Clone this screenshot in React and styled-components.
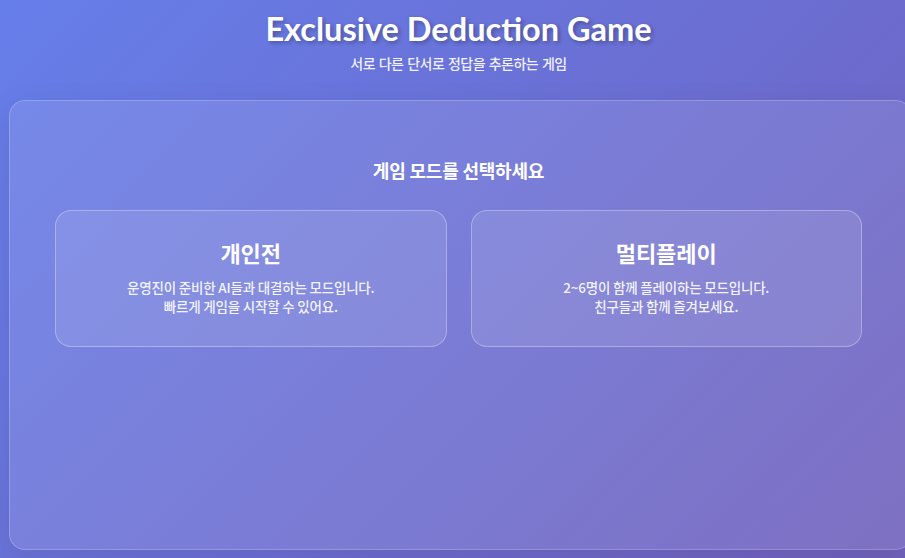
import React from "react";
import styled, { createGlobalStyle } from "styled-components";

const Global = createGlobalStyle`
  html, body { margin: 0; padding: 0; }
  body {
    min-height: 558px;
    background: linear-gradient(135deg, #667eea 0%, #7060bc 100%);
    font-family: "Noto Sans", "Noto Sans CJK KR", sans-serif;
    color: #fff;
    overflow: hidden;
  }
`;

const Page = styled.div`
  width: 903px;
  margin-left: 9px;
  display: flex;
  flex-direction: column;
  align-items: stretch;
`;

const Header = styled.header`
  width: 899px;
  display: flex;
  flex-direction: column;
  align-items: center;
  padding-top: 9px;
  height: 100px;
  box-sizing: border-box;
`;

const Title = styled.h1`
  margin: 0;
  font-family: "Lato", "Noto Sans", sans-serif;
  font-weight: 700;
  font-size: 32.5px;
  line-height: 40px;
  text-shadow: 2px 2px 4px rgba(0, 0, 0, 0.3);
`;

const Subtitle = styled.p`
  margin: 4px 0 0;
  font-family: "Noto Sans CJK KR", sans-serif;
  font-size: 14px;
  line-height: 20px;
  font-weight: 500;
  letter-spacing: -0.5px;
  word-spacing: 1px;
  color: rgba(255, 255, 255, 0.92);
`;

const Panel = styled.section`
  height: 450px;
  box-sizing: border-box;
  border-radius: 16px;
  background: rgba(255, 255, 255, 0.1);
  border: 1px solid rgba(255, 255, 255, 0.2);
  box-shadow: 0 8px 32px rgba(0, 0, 0, 0.08);
  padding: 56px 49px 0 45px;
  display: flex;
  flex-direction: column;
  align-items: stretch;
`;

const SectionTitle = styled.h2`
  margin: 0;
  text-align: center;
  font-family: "Noto Sans CJK KR", sans-serif;
  font-size: 18px;
  line-height: 26px;
  font-weight: 700;
  letter-spacing: -0.2px;
`;

const Grid = styled.div`
  margin-top: 27px;
  display: grid;
  grid-template-columns: 1fr 1fr;
  gap: 24px;
`;

const Card = styled.button`
  height: 137px;
  box-sizing: border-box;
  border-radius: 16px;
  background: rgba(255, 255, 255, 0.1);
  border: 1.5px solid rgba(255, 255, 255, 0.3);
  color: #fff;
  display: flex;
  flex-direction: column;
  align-items: center;
  padding: 25px 16px 0;
  cursor: pointer;
  font-family: "Noto Sans CJK KR", sans-serif;
`;

const CardTitle = styled.h3`
  margin: 0;
  font-size: 22px;
  line-height: 32px;
  font-weight: 700;
`;

const CardDesc = styled.p`
  margin: 10px 0 0;
  font-size: 13.5px;
  line-height: 19px;
  font-weight: 500;
  letter-spacing: -0.2px;
  color: rgba(255, 255, 255, 0.92);
  text-align: center;
`;

const modes = [
  {
    title: "개인전",
    lines: ["운영진이 준비한 AI들과 대결하는 모드입니다.", "빠르게 게임을 시작할 수 있어요."],
  },
  {
    title: "멀티플레이",
    lines: ["2~6명이 함께 플레이하는 모드입니다.", "친구들과 함께 즐겨보세요."],
  },
];

export default function App() {
  return (
    <>
      <Global />
      <Page>
        <Header>
          <Title>Exclusive Deduction Game</Title>
          <Subtitle>서로 다른 단서로 정답을 추론하는 게임</Subtitle>
        </Header>
        <Panel>
          <SectionTitle>게임 모드를 선택하세요</SectionTitle>
          <Grid>
            {modes.map((m) => (
              <Card key={m.title}>
                <CardTitle>{m.title}</CardTitle>
                <CardDesc>
                  {m.lines[0]}
                  <br />
                  {m.lines[1]}
                </CardDesc>
              </Card>
            ))}
          </Grid>
        </Panel>
      </Page>
    </>
  );
}
